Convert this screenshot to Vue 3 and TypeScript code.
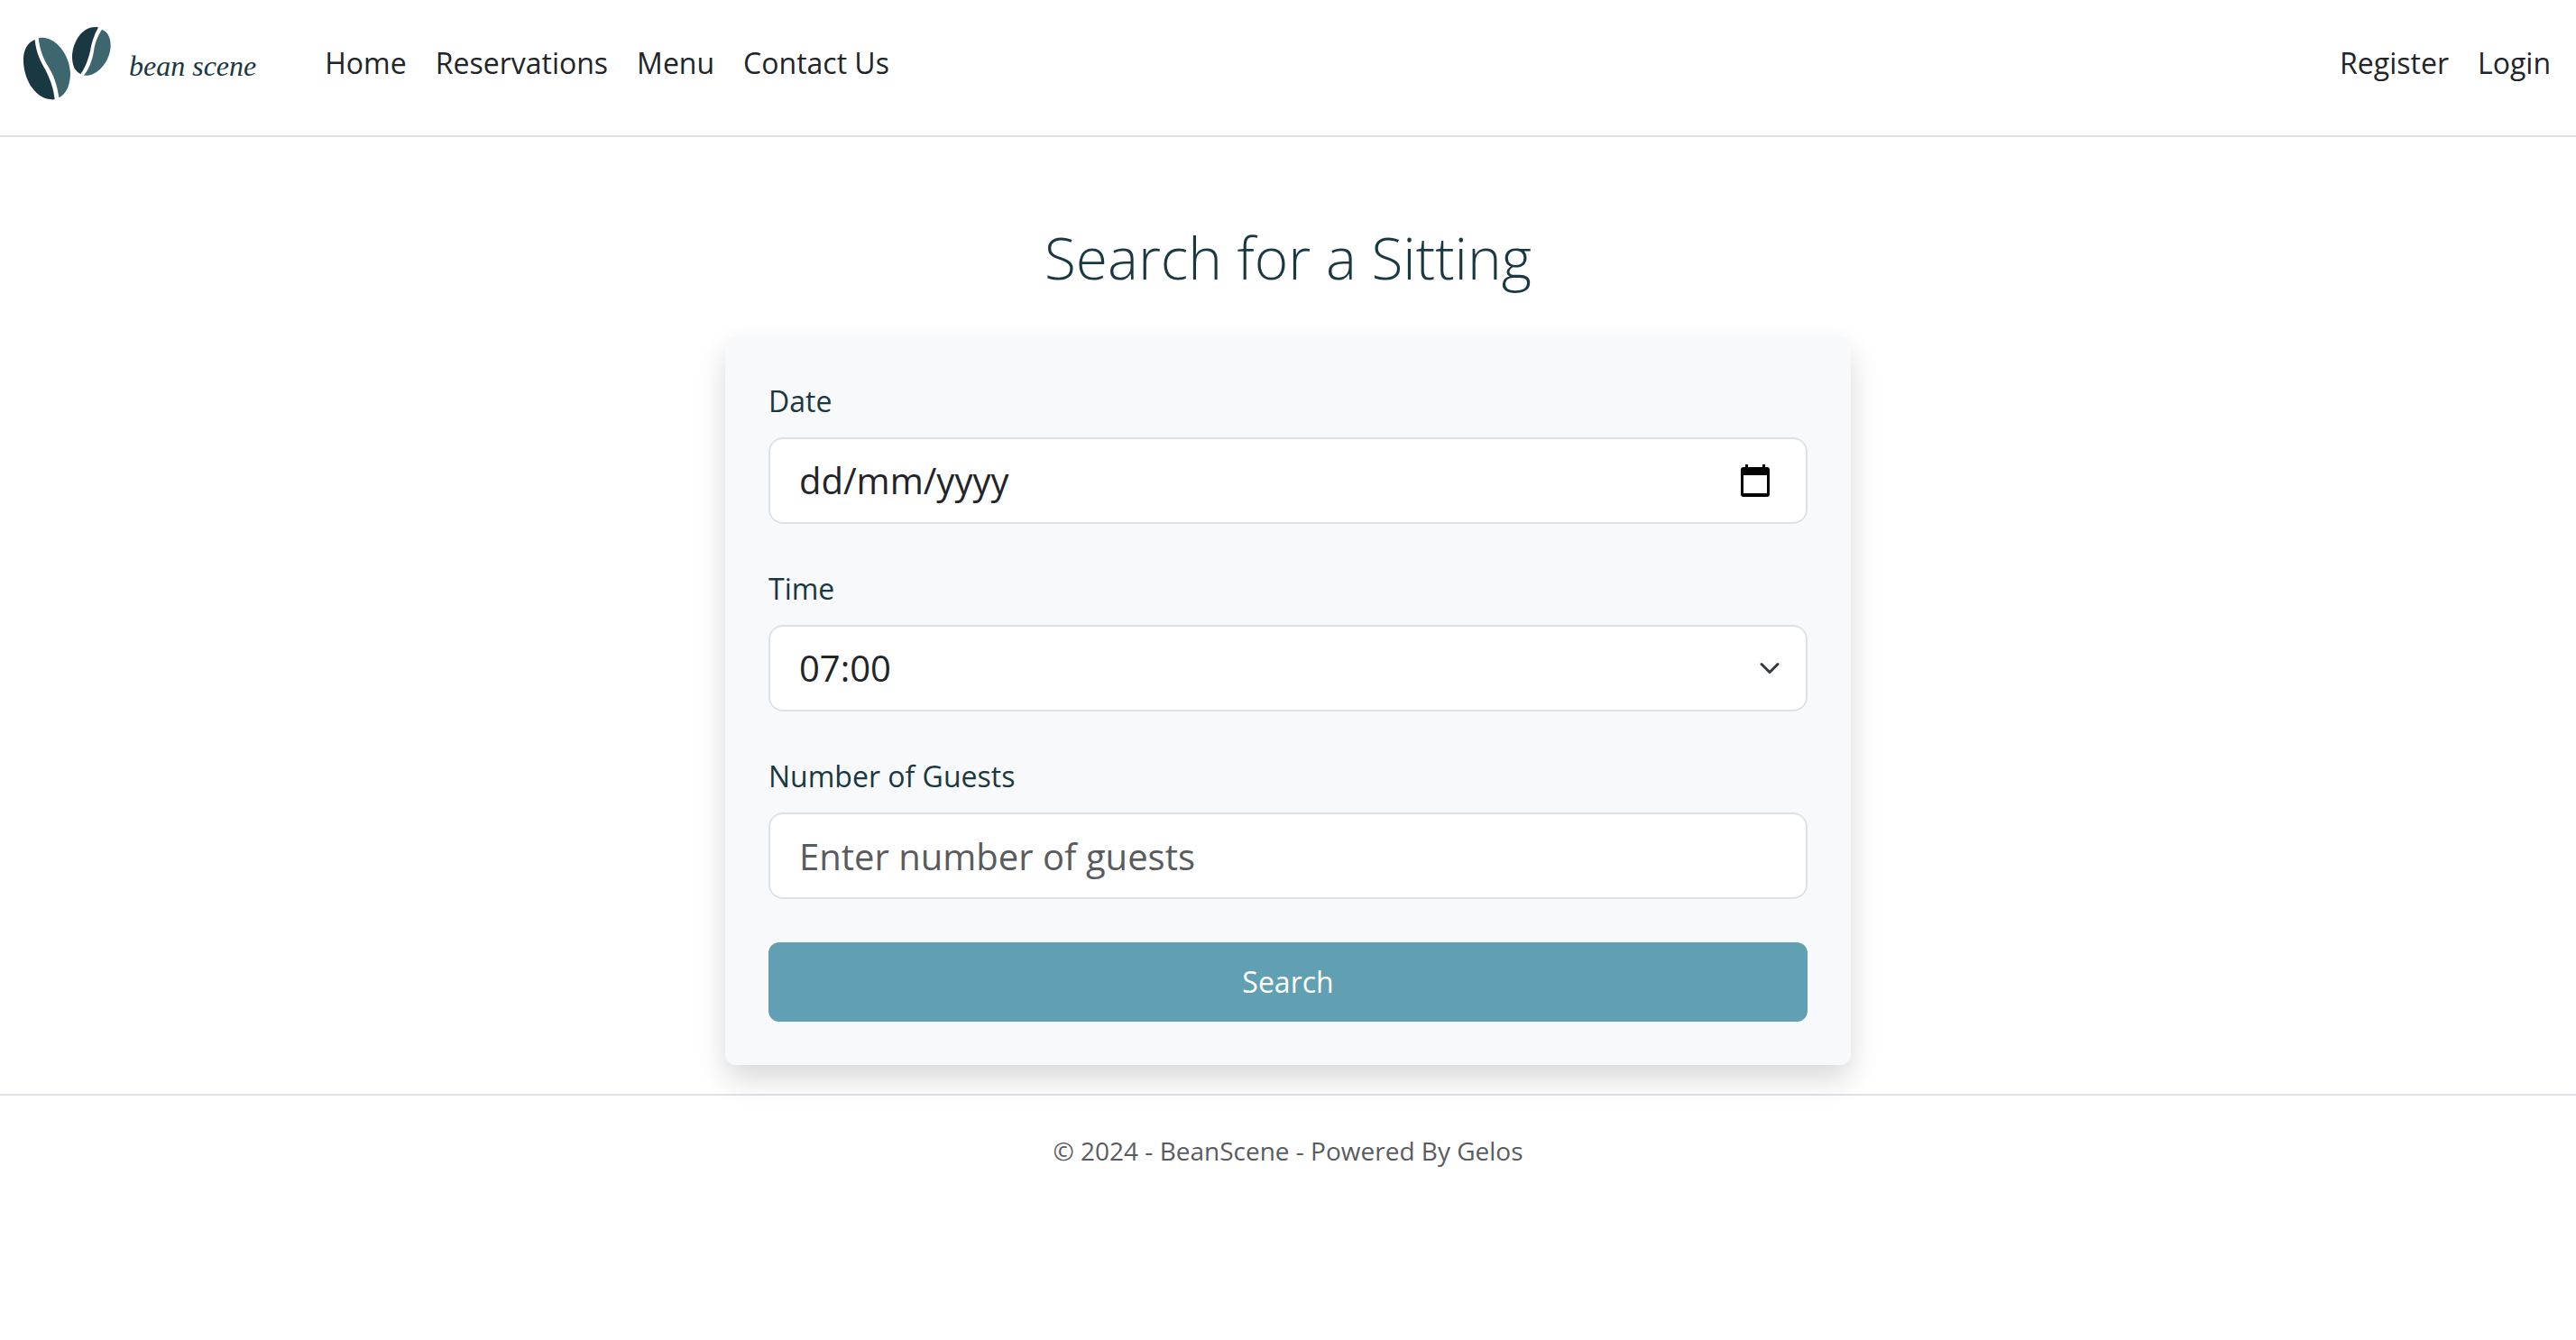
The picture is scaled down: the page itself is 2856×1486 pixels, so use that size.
<script setup lang="ts">
import { ref } from 'vue'

interface NavLink {
  label: string
  href: string
}

const mainLinks: NavLink[] = [
  { label: 'Home', href: '#home' },
  { label: 'Reservations', href: '#reservations' },
  { label: 'Menu', href: '#menu' },
  { label: 'Contact Us', href: '#contact' },
]

const accountLinks: NavLink[] = [
  { label: 'Register', href: '#register' },
  { label: 'Login', href: '#login' },
]

const times: string[] = Array.from({ length: 15 }, (_, i) => `${String(i + 7).padStart(2, '0')}:00`)

const date = ref('')
const time = ref(times[0])
const guests = ref('')

const dateInput = ref<HTMLInputElement | null>(null)
</script>

<template>
  <header class="navbar">
    <a class="brand" href="#home">
      <svg class="beans" viewBox="78 90 291 243" aria-hidden="true">
        <path fill="#1a3842" d="M116 132C85 143 76 178 78 208C82 275 125 336 182 331C178 290 165 260 150 230C135 205 120 175 116 132Z" />
        <path fill="#3e666f" d="M128 127C180 115 232 180 234 243C234 280 222 312 196 325C190 280 178 250 162 224C145 198 132 165 128 127Z" />
        <path fill="#1a3842" d="M327 91C275 82 240 140 240 192C241 220 250 238 268 246C282 228 293 200 300 170C304 145 312 118 327 91Z" />
        <path fill="#3e666f" d="M339 98C360 105 369 130 368 155C364 210 320 256 279 251C295 230 306 205 312 170C316 140 326 118 339 98Z" />
      </svg>
      <span class="brand-name">bean scene</span>
    </a>
    <nav class="links">
      <a v-for="link in mainLinks" :key="link.label" :href="link.href">{{ link.label }}</a>
    </nav>
    <nav class="links account">
      <a v-for="link in accountLinks" :key="link.label" :href="link.href">{{ link.label }}</a>
    </nav>
  </header>

  <main class="content">
    <h1>Search for a Sitting</h1>
    <form class="card" @submit.prevent>
      <div class="field">
        <label for="date">Date</label>
        <div class="control date-control">
          <input id="date" ref="dateInput" v-model="date" type="text" inputmode="numeric" placeholder="dd/mm/yyyy" />
          <button class="picker" type="button" aria-label="Choose date" @click="dateInput?.focus()">
            <svg viewBox="0 0 32 36" aria-hidden="true">
              <path fill="#000" fill-rule="evenodd" d="M5 0H8V3H24V0H27V3H29Q32 3 32 6V33Q32 36 29 36H3Q0 36 0 33V6Q0 3 3 3H5ZM3 12V32H29V12Z" />
            </svg>
          </button>
        </div>
      </div>
      <div class="field">
        <label for="time">Time</label>
        <select id="time" v-model="time" class="control">
          <option v-for="t in times" :key="t" :value="t">{{ t }}</option>
        </select>
      </div>
      <div class="field">
        <label for="guests">Number of Guests</label>
        <input id="guests" v-model="guests" class="control" type="text" inputmode="numeric" placeholder="Enter number of guests" />
      </div>
      <button class="submit" type="submit">Search</button>
    </form>
  </main>

  <footer class="footer">© 2024 - BeanScene - Powered By Gelos</footer>
</template>

<style>
body {
  background: #fff;
  color: #212529;
  font-family: "Open Sans", "Noto Sans", sans-serif;
  font-size: 32px;
  line-height: 48px;
}
</style>

<style scoped>
*,
*::before,
*::after {
  box-sizing: border-box;
}

.navbar {
  display: flex;
  align-items: center;
  padding: 30px 28px 39px 26px;
  border-bottom: 2px solid #dee2e6;
}

.brand {
  display: flex;
  align-items: center;
  gap: 20px;
  margin-right: 76px;
  color: #1a3842;
  text-decoration: none;
}

.beans {
  display: block;
  width: 97px;
  height: 81px;
}

.brand-name {
  padding-top: 4px;
  font-family: "Liberation Serif", serif;
  font-style: italic;
  white-space: nowrap;
}

.links {
  display: flex;
  gap: 32px;
  padding-bottom: 2px;
}

.links a {
  color: #212529;
  text-decoration: none;
}

.account {
  margin-left: auto;
}

.content {
  display: flex;
  flex-direction: column;
  align-items: center;
  padding: 96px 24px 32px;
}

h1 {
  margin: 0 0 50px;
  color: #1a3842;
  font-size: 64px;
  font-weight: 300;
  line-height: 75px;
}

.card {
  display: flex;
  flex-direction: column;
  gap: 48px;
  width: 100%;
  max-width: 1248px;
  padding: 48px;
  border-radius: 12px;
  background: #f8f9fb;
  box-shadow: 0 16px 32px rgba(0, 0, 0, 0.15);
}

.field {
  display: flex;
  flex-direction: column;
  gap: 16px;
}

label {
  align-self: flex-start;
  color: #1a3842;
}

.control {
  width: 100%;
  height: 96px;
  margin: 0;
  padding: 16px 32px;
  border: 2px solid #dee2e6;
  border-radius: 16px;
  background-color: #fff;
  color: #212529;
  font-family: inherit;
  font-size: 40px;
  line-height: 60px;
}

.control::placeholder {
  color: #595c5f;
  opacity: 1;
}

.date-control {
  display: flex;
  align-items: center;
  padding-right: 40px;
}

.date-control input {
  flex: 1;
  min-width: 0;
  padding: 0;
  border: 0;
  outline: 0;
  background: none;
  color: #212529;
  font: inherit;
}

.date-control input::placeholder {
  color: #212529;
  opacity: 1;
}

.picker {
  padding: 0;
  border: 0;
  background: none;
  cursor: pointer;
}

.picker svg {
  display: block;
  width: 32px;
  height: 36px;
}

select.control {
  appearance: none;
  background-image: url("data:image/svg+xml,%3csvg xmlns='http://www.w3.org/2000/svg' viewBox='0 0 16 16'%3e%3cpath fill='none' stroke='%23343a40' stroke-linecap='round' stroke-linejoin='round' stroke-width='2' d='m2 5 6 6 6-6'/%3e%3c/svg%3e");
  background-repeat: no-repeat;
  background-position: right 24px center;
  background-size: 32px 24px;
}

.submit {
  padding: 20px 24px;
  border: 0;
  border-radius: 12px;
  background: #619fb2;
  color: #fff;
  font: inherit;
  cursor: pointer;
}

.footer {
  padding: 40px 24px;
  border-top: 2px solid #dee2e6;
  color: #595c5f;
  font-size: 28px;
  line-height: 42px;
  text-align: center;
}
</style>
